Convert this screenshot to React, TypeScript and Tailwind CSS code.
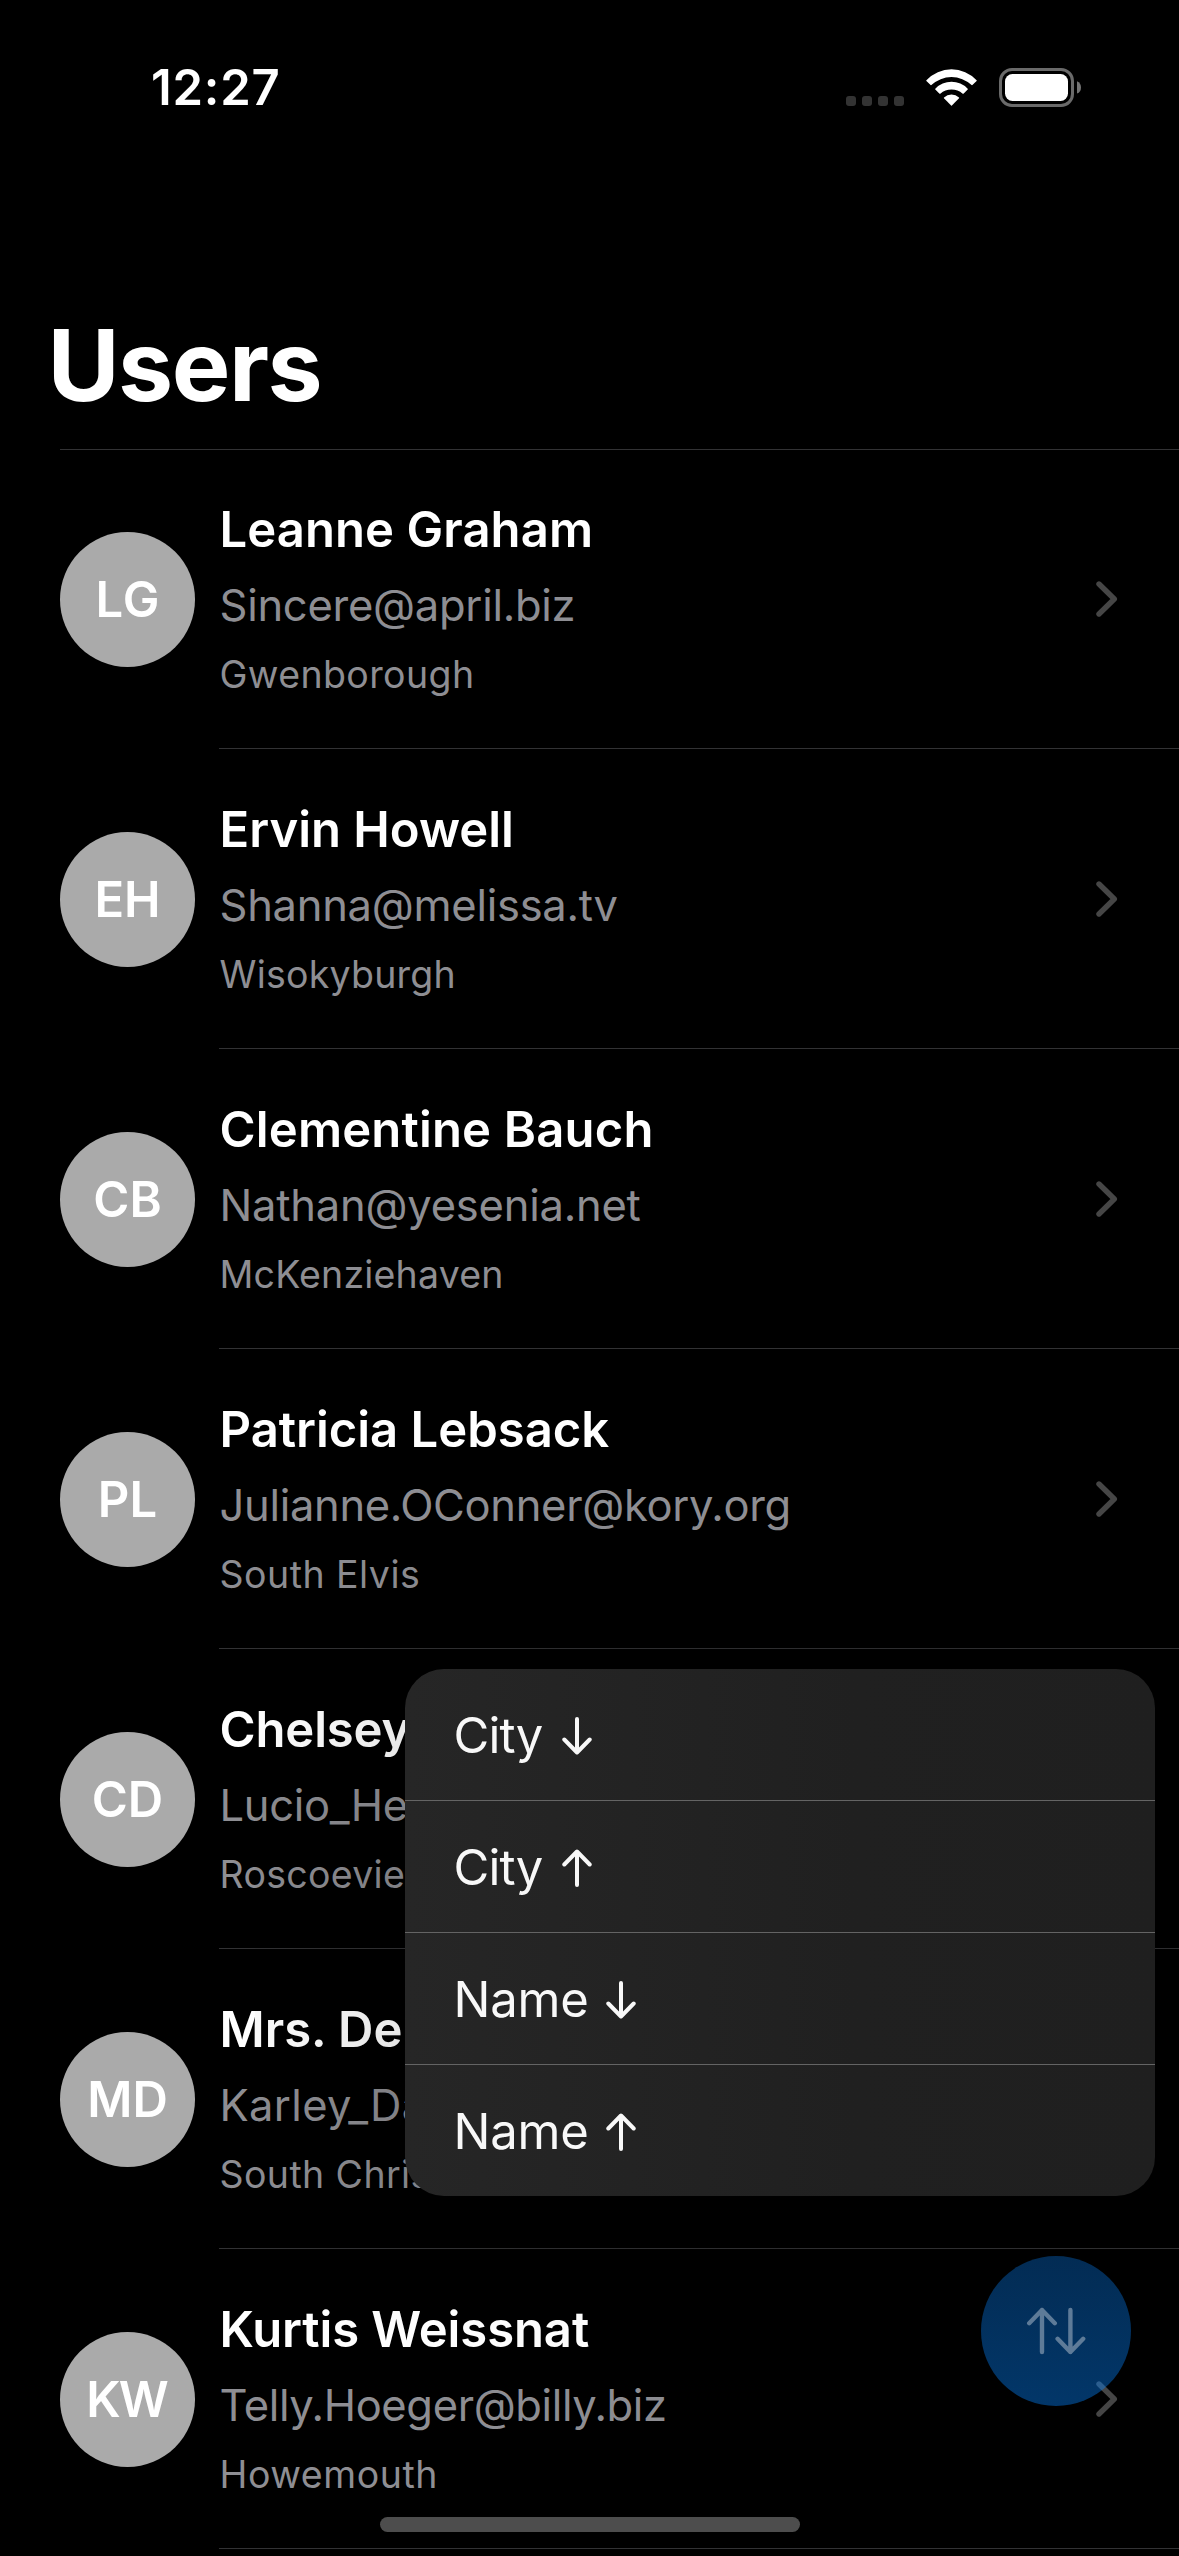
type User = {
  initials: string;
  initialsTracking: string;
  name: string;
  nameTracking: string;
  email: string;
  emailTracking: string;
  city: string;
  cityTracking: string;
};

const users: User[] = [
  {
    initials: "LG", initialsTracking: "tracking-[1px] indent-[1px]",
    name: "Leanne Graham", nameTracking: "tracking-[0.07px]",
    email: "Sincere@april.biz", emailTracking: "tracking-[-0.26px]",
    city: "Gwenborough", cityTracking: "tracking-[0.38px]",
  },
  {
    initials: "EH", initialsTracking: "tracking-normal",
    name: "Ervin Howell", nameTracking: "tracking-normal",
    email: "Shanna@melissa.tv", emailTracking: "tracking-[-0.27px]",
    city: "Wisokyburgh", cityTracking: "tracking-[0.22px]",
  },
  {
    initials: "CB", initialsTracking: "tracking-normal",
    name: "Clementine Bauch", nameTracking: "tracking-[0.17px]",
    email: "Nathan@yesenia.net", emailTracking: "tracking-[-0.22px]",
    city: "McKenziehaven", cityTracking: "tracking-[0.18px]",
  },
  {
    initials: "PL", initialsTracking: "tracking-normal",
    name: "Patricia Lebsack", nameTracking: "tracking-[-0.02px]",
    email: "Julianne.OConner@kory.org", emailTracking: "tracking-[-0.31px]",
    city: "South Elvis", cityTracking: "tracking-[0.48px]",
  },
  {
    initials: "CD", initialsTracking: "tracking-normal",
    name: "Chelsey Dietrich", nameTracking: "tracking-[-0.15px]",
    email: "Lucio_Hettinger@annie.ca", emailTracking: "tracking-[-0.3px]",
    city: "Roscoeview", cityTracking: "tracking-[0.3px]",
  },
  {
    initials: "MD", initialsTracking: "tracking-normal",
    name: "Mrs. Dennis Schulist", nameTracking: "tracking-normal",
    email: "Karley_Dach@jasper.info", emailTracking: "tracking-[0.35px]",
    city: "South Christy", cityTracking: "tracking-[0.4px]",
  },
  {
    initials: "KW", initialsTracking: "tracking-[-2px] indent-[-2px]",
    name: "Kurtis Weissnat", nameTracking: "tracking-[-0.1px]",
    email: "Telly.Hoeger@billy.biz", emailTracking: "tracking-[-0.37px]",
    city: "Howemouth", cityTracking: "tracking-[0.55px]",
  },
];

const sortOptions = [
  { label: "City", tracking: "tracking-[-0.8px]", gap: "gap-[19px]", up: false },
  { label: "City", tracking: "tracking-[-0.8px]", gap: "gap-[19px]", up: true },
  { label: "Name", tracking: "tracking-[-0.2px]", gap: "gap-[17px]", up: false },
  { label: "Name", tracking: "tracking-[-0.2px]", gap: "gap-[17px]", up: true },
];

function StatusBar() {
  return (
    <header className="flex h-[176px] items-start justify-between pl-[151px] pr-[98px] pt-[58px]">
      <span className="text-[49px] font-semibold leading-[60px] tracking-[0.8px]">12:27</span>
      <div className="flex items-start pt-[10px]">
        <div className="mr-[22px] flex gap-[6px] pt-7">
          {[0, 1, 2, 3].map((dot) => (
            <span key={dot} className="size-[10px] rounded-[3px] bg-[#333333]" />
          ))}
        </div>
        <svg className="mr-[22px] mt-px h-[37px] w-[51px]" viewBox="0 0 51 37" fill="#fff">
          <path d="M.4 11.2A34.5 34.5 0 0 1 50.6 11.2Q51 11.6 50.6 12L46.4 16Q46 16.3 45.6 16A29.5 29.5 0 0 0 5.4 16Q5 16.3 4.6 16L.4 12Q0 11.6.4 11.2Z" />
          <path d="M9.3 19.7A22.5 22.5 0 0 1 41.7 19.7Q42.1 20.1 41.7 20.6L37.5 24.7Q37.1 25 36.7 24.7A17 17 0 0 0 14.3 24.7Q13.9 25 13.5 24.7L9.3 20.6Q8.9 20.1 9.3 19.7Z" />
          <path d="M18 28.4A11 11 0 0 1 33 28.4Q33.4 28.8 33 29.3L25.9 36.5Q25.5 36.9 25.1 36.5L18 29.3Q17.6 28.8 18 28.4Z" />
        </svg>
        <svg className="h-[39px] w-[82px]" viewBox="0 0 82 39">
          <rect x="1.5" y="1.5" width="72" height="36" rx="11.5" fill="none" stroke="#6a6a6a" strokeWidth="3" />
          <rect x="6" y="6" width="63" height="27" rx="7.5" fill="#fff" />
          <path d="M78 13.2Q82 15 82 19.4T78 25.6Z" fill="#747474" />
        </svg>
      </div>
    </header>
  );
}

function Chevron() {
  return (
    <svg
      className="h-9 w-[22px]"
      viewBox="0 0 22 36"
      fill="none"
      stroke="#464646"
      strokeWidth="5.4"
      strokeLinecap="round"
      strokeLinejoin="round"
    >
      <path d="M3 3L18.3 18L3 33" />
    </svg>
  );
}

function UserRow({ user }: { user: User }) {
  return (
    <li className="flex h-[300px] shrink-0 pl-[60px]">
      <div className="mt-[83px] flex size-[135px] items-center justify-center rounded-full bg-[#aaaaaa]">
        <span className={"text-[49px] font-semibold leading-[60px] " + user.initialsTracking}>
          {user.initials}
        </span>
      </div>
      <div className="ml-6 flex flex-1 items-center justify-between border-b border-[#323234] pr-[61px]">
        <div className="flex h-full flex-col whitespace-nowrap pl-[0.5px] pt-[51px]">
          <span className={"text-[49px] font-semibold leading-[60px] " + user.nameTracking}>
            {user.name}
          </span>
          <span
            className={"mt-[18px] text-[43.5px] leading-[54px] text-[#8e8e93] " + user.emailTracking}
          >
            {user.email}
          </span>
          <span
            className={"mt-5 text-[37.5px] leading-[46px] text-[#8e8e93] " + user.cityTracking}
          >
            {user.city}
          </span>
        </div>
        <Chevron />
      </div>
    </li>
  );
}

function SortArrow({ up }: { up: boolean }) {
  return (
    <svg
      className="h-[38px] w-[30px]"
      viewBox="0 0 30 38"
      fill="none"
      stroke="#f8f8f8"
      strokeWidth="4"
      strokeLinecap="round"
      strokeLinejoin="round"
    >
      {up ? <path d="M15 36V3M2.3 15.5L15 2.5L27.7 15.5" /> : <path d="M15 2V35M2.3 22.5L15 35.5L27.7 22.5" />}
    </svg>
  );
}

function SortMenu() {
  return (
    <div className="absolute left-[405px] top-[1669px] flex h-[527px] w-[750px] flex-col overflow-hidden rounded-[39px] bg-linear-to-r from-[#262626] via-[#202020] via-60% to-[#1f1f1f]">
      {sortOptions.map((option, index) => (
        <button
          key={index}
          className={
            "flex h-[132px] shrink-0 items-center border-b border-[#646464] pl-[48.5px] pt-0.5 text-[#f8f8f8] last:h-[131px] last:border-b-0 " +
            option.gap
          }
        >
          <span className={"text-[49px] leading-[60px] " + option.tracking}>{option.label}</span>
          <SortArrow up={option.up} />
        </button>
      ))}
    </div>
  );
}

function SortButton() {
  return (
    <button className="absolute left-[981px] top-[2256px] flex size-[150px] items-center justify-center rounded-full bg-linear-to-b from-[#087df0]/35 to-[#0582fa]/42">
      <svg
        className="h-12 w-[60px]"
        viewBox="0 0 60 48"
        fill="none"
        stroke="#5e7b98"
        strokeWidth="4.4"
        strokeLinecap="round"
        strokeLinejoin="round"
      >
        <path d="M16 45V3M3.2 16.2L16 3L28.8 16.2" />
        <path d="M44.4 3V45M31.6 31.8L44.4 45L57.2 31.8" />
      </svg>
    </button>
  );
}

export default function App() {
  return (
    <div className="relative flex h-[2556px] w-[1179px] flex-col overflow-hidden bg-black font-['Inter',sans-serif] text-white">
      <StatusBar />
      <main className="flex flex-col">
        <h1 className="flex h-[273px] items-start pl-[47.5px] pt-[130px] text-[98.5px] font-bold leading-[120px] tracking-[-1.5px]">
          Users
        </h1>
        <div className="ml-[60px] h-px bg-[#323234]" />
        <ul className="-mt-px flex flex-col">
          {users.map((user) => (
            <UserRow key={user.initials} user={user} />
          ))}
        </ul>
      </main>
      <div className="pointer-events-none absolute left-[405px] top-[1669px] h-[527px] w-[750px] rounded-[39px] shadow-[0_0_240px_rgba(0,6,0,0.28)]" />
      <SortButton />
      <SortMenu />
      <div className="absolute left-[380px] top-[2517px] h-[15px] w-[420px] rounded-full bg-[#4d4d4d]" />
    </div>
  );
}
